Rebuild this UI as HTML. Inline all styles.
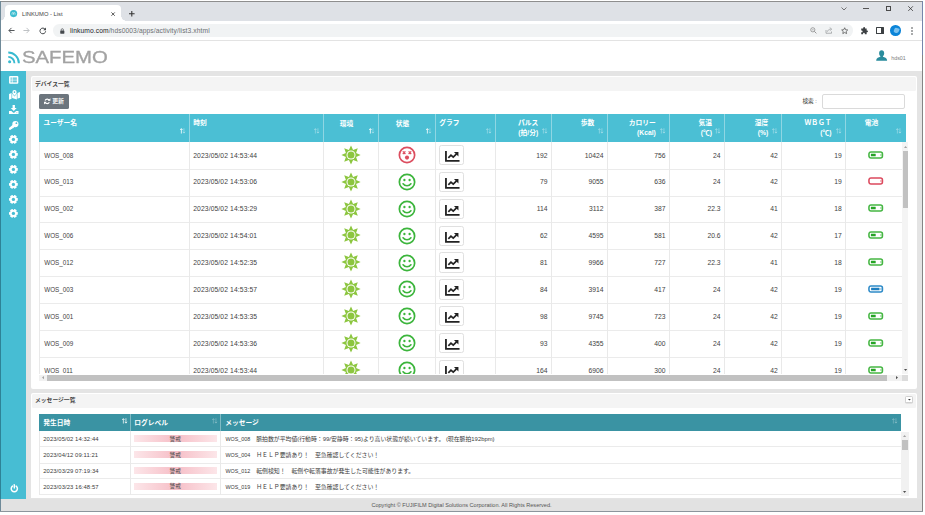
<!DOCTYPE html>
<html lang="ja">
<head>
<meta charset="utf-8">
<title>LINKUMO - List</title>
<style>
html,body{margin:0;padding:0;}
body{width:925px;height:515px;position:relative;overflow:hidden;background:#fff;
  font-family:"Liberation Sans","Noto Sans CJK JP",sans-serif;color:#222;}
*{box-sizing:border-box;}
.abs{position:absolute;}
svg{display:block;overflow:visible;}
/* ---------- browser window ---------- */
#win{position:absolute;left:0;top:0;width:925px;height:515px;background:#fff;overflow:hidden;}
#wc{position:absolute;left:1px;top:2px;width:921px;height:510px;}
#tabstrip{position:absolute;left:0;top:0;width:921px;height:19px;background:#dee1e6;}
#tab{position:absolute;left:3.8px;top:3.2px;width:116.6px;height:15.8px;background:#fff;border-radius:4px 4px 0 0;}
#tab:before,#tab:after{content:'';position:absolute;bottom:0;width:3.5px;height:3.5px;}
#tab:before{left:-3.5px;background:radial-gradient(circle at 0 0,rgba(255,255,255,0) 3.3px,#fff 3.6px);}
#tab:after{right:-3.5px;background:radial-gradient(circle at 100% 0,rgba(255,255,255,0) 3.3px,#fff 3.6px);}
#tab .t{position:absolute;left:17.2px;top:5.8px;font-size:5.8px;line-height:7px;color:#444;white-space:nowrap;}
#toolbar{position:absolute;left:0;top:19px;width:921px;height:19.5px;background:#fff;border-bottom:1px solid #e3e3e3;}
#omni{position:absolute;left:52.4px;top:3.4px;width:800px;height:12.6px;border-radius:6.3px;background:#f1f3f4;}
#omni .u{position:absolute;left:16.6px;top:2.3px;font-size:6.7px;line-height:8px;color:#6b6f73;white-space:nowrap;letter-spacing:0.1px;}
#omni .u b{font-weight:normal;color:#202124;}
/* ---------- app ---------- */
#apphead{position:absolute;left:0;top:38.5px;width:921px;height:30.5px;background:#fff;}
#side{position:absolute;left:0;top:69px;width:25.2px;height:428px;background:#47bdd3;}
#main{position:absolute;left:25.2px;top:69px;width:895.8px;height:428px;background:#e4e4e4;}
#foot{position:absolute;left:0;top:497px;width:921px;height:12px;background:#e2e2e2;text-align:center;font-size:5.55px;line-height:12.4px;color:#555;}
.panel{position:absolute;background:#fff;border-radius:2px;}
.phead{position:absolute;left:1px;top:1px;right:1px;background:#f4f4f4;border-radius:1.5px;}
.ptitle{position:absolute;font-weight:bold;font-size:5.8px;line-height:9px;color:#444;white-space:nowrap;}

.th{font-weight:bold;color:#fff;font-size:6.75px;line-height:9px;white-space:nowrap;}
.td{font-size:6.75px;line-height:9px;color:#424242;white-space:nowrap;}
.tn{font-size:6.3px;}
.tt{letter-spacing:0.11px;}
.tm{font-size:5.88px;line-height:8px;color:#3a3a3a;white-space:nowrap;}
.tm i{font-style:normal;font-size:5.4px;}
.tmd{letter-spacing:0.08px;}
.gbtn{width:24.6px;height:20.2px;border:1px solid #e0e0e0;border-radius:2.4px;background:#fff;}
</style>
</head>
<body>
<div id="win">
<div class="abs" style="left:0;top:1px;width:923px;height:1px;background:#8e8e8e"></div>
<div class="abs" style="left:0;top:1px;width:1px;height:511px;background:#6f8a99"></div>
<div class="abs" style="left:0;top:71px;width:1px;height:428px;background:#2e8296"></div>
<div class="abs" style="left:922px;top:1px;width:1px;height:511px;background:#858585"></div>
<div class="abs" style="left:922px;top:1px;width:1px;height:54px;background:#7686ab"></div>
<div class="abs" style="left:0;top:511px;width:923px;height:1px;background:#8c959c"></div>
<div id="wc">
  <!-- tab strip -->
  <div id="tabstrip">
    <div id="tab">
      <svg class="abs" style="left:5.7px;top:5.1px" width="7.2" height="7.2" viewBox="0 0 16 16"><circle cx="8" cy="8" r="8" fill="#3bbccf"/><path d="M4.5 10.5v-3a1.7 1.7 0 0 1 3.4 0v3M7.9 7.5a1.7 1.7 0 0 1 3.4 0v3" fill="none" stroke="#fff" stroke-width="1.3"/></svg>
      <div class="t">LINKUMO - List</div>
      <svg class="abs" style="left:106.5px;top:6.8px" width="4.2" height="4.2" viewBox="0 0 10 10"><path d="M1 1l8 8M9 1l-8 8" stroke="#333" stroke-width="1.9" fill="none"/></svg>
    </div>
    <svg class="abs" style="left:128.2px;top:8.8px" width="5.6" height="5.6" viewBox="0 0 10 10"><path d="M5 0v10M0 5h10" stroke="#333" stroke-width="1.9" fill="none"/></svg>
    <!-- window controls -->
    <svg class="abs" style="left:839.9px;top:4.6px" width="6" height="4" viewBox="0 0 12 8"><path d="M1 1l5 5 5-5" fill="none" stroke="#444" stroke-width="1.4"/></svg>
    <div class="abs" style="left:862.3px;top:6px;width:5.6px;height:1px;background:#555"></div>
    <div class="abs" style="left:885px;top:4px;width:5px;height:5px;border:1px solid #4a4a4a"></div>
    <svg class="abs" style="left:907.1px;top:3.8px" width="5.2" height="5.2" viewBox="0 0 10 10"><path d="M0.5 0.5l9 9M9.5 0.5l-9 9" stroke="#333" stroke-width="1.5" fill="none"/></svg>
  </div>
  <!-- toolbar -->
  <div id="toolbar">
    <svg class="abs" style="left:6.5px;top:6.1px" width="7" height="7" viewBox="0 0 16 16"><path d="M15 8H2.5M8 2L2 8l6 6" fill="none" stroke="#3c4043" stroke-width="2"/></svg>
    <svg class="abs" style="left:22.1px;top:6.1px" width="7" height="7" viewBox="0 0 16 16"><path d="M1 8h12.5M8 2l6 6-6 6" fill="none" stroke="#b5b8bb" stroke-width="2"/></svg>
    <svg class="abs" style="left:37.6px;top:5.6px" width="7.6" height="7.6" viewBox="0 0 16 16"><path d="M13.2 5.2A6 6 0 1 0 14 9" fill="none" stroke="#3c4043" stroke-width="2"/><path d="M14.6 1v5.6H9z" fill="#3c4043"/></svg>
    <div id="omni">
      <svg class="abs" style="left:6.3px;top:3.3px" width="4.6" height="5.8" viewBox="0 0 10 12"><rect x="0.5" y="5" width="9" height="7" rx="1" fill="#45494d"/><path d="M2.6 5.5V3.6a2.4 2.4 0 0 1 4.8 0v1.9" fill="none" stroke="#45494d" stroke-width="1.5"/></svg>
      <div class="u"><b>linkumo.com</b>/hds0003/apps/activity/list3.xhtml</div>
      <!-- zoom, share, star -->
      <svg class="abs" style="left:757px;top:2.6px" width="7" height="7" viewBox="0 0 14 14"><circle cx="5.6" cy="5.6" r="4.2" fill="none" stroke="#777" stroke-width="1.3"/><path d="M8.8 8.8l4 4" stroke="#777" stroke-width="1.5"/><path d="M3.8 5.6h3.6" stroke="#777" stroke-width="1"/></svg>
      <svg class="abs" style="left:771.6px;top:2.6px" width="8" height="7" viewBox="0 0 16 14"><path d="M2 6v6.5h11V9" fill="none" stroke="#8a8d90" stroke-width="1.3"/><path d="M5 9.5c.5-3 2.5-5 6-5.2" fill="none" stroke="#8a8d90" stroke-width="1.3"/><path d="M9.5 1.2l4 3.1-4 3.1" fill="none" stroke="#8a8d90" stroke-width="1.3"/></svg>
      <svg class="abs" style="left:787.9px;top:2.3px" width="7.4" height="7.4" viewBox="0 0 16 16"><path d="M8 1.6l2 4.3 4.6.500-3.4 3.2.9 4.7L8 12l-4.1 2.3.9-4.7L1.4 6.4 6 5.9z" fill="none" stroke="#444" stroke-width="1.5" stroke-linejoin="round"/></svg>
    </div>
    <!-- extension, side panel, avatar, menu -->
    <svg class="abs" style="left:859.4px;top:5.5px" width="8.2" height="8.2" viewBox="0 0 16 16"><path d="M6.5 1.2a1.7 1.7 0 0 1 3.3.600V3h3.2v3.6h.800a1.8 1.8 0 0 1 0 3.6H13V14H9.4v-1a1.7 1.7 0 0 0-3.4 0v1H2.4v-3.6h1a1.7 1.7 0 0 0 0-3.4h-1V3h3.7V1.8z" fill="#3c4043"/></svg>
    <div class="abs" style="left:875.2px;top:6.2px;width:7.4px;height:6.8px;border:1px solid #3c4043;border-right-width:3px;border-radius:0.6px"></div>
    <div class="abs" style="left:889.4px;top:4.2px;width:10.6px;height:10.6px;border-radius:50%;background:#0b84d8;overflow:hidden"><div class="abs" style="left:3.2px;top:3.2px;width:5px;height:5px;background:#7cc1ee;border-radius:40% 10% 60% 30%;transform:rotate(20deg)"></div></div>
    <svg class="abs" style="left:909.5px;top:5.6px" width="2" height="8" viewBox="0 0 2 8"><circle cx="1" cy="1" r="0.8" fill="#3c4043"/><circle cx="1" cy="4" r="0.8" fill="#3c4043"/><circle cx="1" cy="7" r="0.8" fill="#3c4043"/></svg>
  </div>

  <!-- app header -->
  <div id="apphead">
    <!-- logo -->
    <svg class="abs" style="left:7px;top:10.2px" width="12.4" height="12.4" viewBox="0 0 24 24"><circle cx="3.2" cy="20.8" r="3" fill="#38bad0"/><path d="M0.5 11.5a12 12 0 0 1 12 12" fill="none" stroke="#38bad0" stroke-width="3.6"/><path d="M0.5 3a20.5 20.5 0 0 1 20.5 20.5" fill="none" stroke="#38bad0" stroke-width="3.8"/></svg>
    <div class="abs" id="logo" style="left:20.6px;top:8.4px;font-size:16px;line-height:18px;color:#a3a3a3;-webkit-text-stroke:0.3px #a3a3a3;letter-spacing:0;white-space:nowrap;transform-origin:0 0;transform:scale(1.27,1)">SAFEMO</div>
    <!-- user -->
    <svg class="abs" style="left:875px;top:9.2px" width="11.3" height="11.3" viewBox="0 0 24 24"><path d="M12 0.5c3.3 0 5.4 2.6 5.4 6.2 0 2.6-1.2 5-2.6 6.2v1.7c3.4 1 8.2 3 8.7 6.6V23H.500v-1.8c.500-3.6 5.3-5.6 8.7-6.6v-1.7C7.8 11.7 6.6 9.3 6.6 6.7 6.6 3.1 8.7.500 12 .500z" fill="#2a8c9d"/></svg>
    <div class="abs" style="left:890.3px;top:14.9px;font-size:5.3px;line-height:6px;color:#7d7d7d;white-space:nowrap">hds01</div>
  </div>

  <div id="side"><svg class="abs" style="left:8px;top:5.1px" width="9.4" height="7.8" viewBox="0 0 19 16"><rect x="0" y="0" width="19" height="16" rx="2.2" fill="#fff"/><g fill="#47bdd3"><rect x="3" y="3.2" width="2.6" height="2.4"/><rect x="7.2" y="3.2" width="8.8" height="2.4"/><rect x="3" y="6.9" width="2.6" height="2.4"/><rect x="7.2" y="6.9" width="8.8" height="2.4"/><rect x="3" y="10.6" width="2.6" height="2.4"/><rect x="7.2" y="10.6" width="8.8" height="2.4"/></g></svg>
<svg class="abs" style="left:7.6px;top:19.4px" width="11" height="9.4" viewBox="0 0 22 19"><g fill="#fff"><path d="M0 8.2l5-2v11.6l-5 2z"/><path d="M6.2 6.6c1.2 2.3 3.2 4.6 4.8 6.3 1.6-1.7 3.6-4 4.8-6.3l0 12.4-9.6-2.6z"/><path d="M17 6.2l5-2v11.6l-5 2z"/><path d="M11 0a4.3 4.3 0 0 1 4.3 4.3c0 2-2.4 5-4.3 7.1-1.9-2.1-4.3-5.1-4.3-7.1A4.3 4.3 0 0 1 11 0z"/></g><circle cx="11" cy="4.2" r="1.7" fill="#47bdd3"/></svg>
<svg class="abs" style="left:8px;top:34px" width="9.5" height="9.2" viewBox="0 0 19 18"><g fill="#fff"><path d="M7.2 0h4.6v6h3.6L9.5 12 3.6 6h3.6z"/><path d="M0 11.8h4.8l2.6 2.6a3 3 0 0 0 4.2 0l2.6-2.6H19V18H0z"/></g><circle cx="15.8" cy="15.4" r="0.9" fill="#47bdd3"/></svg>
<svg class="abs" style="left:8px;top:49.6px" width="9.5" height="8.8" viewBox="0 0 19 17.6"><g fill="#fff"><circle cx="12.8" cy="6.2" r="6.2"/><path d="M8.2 7.2l3.6 3.6-3.6 3.6H6.4v1.8H4.2v1.4H0v-3.4z"/></g><circle cx="14.8" cy="4.4" r="1.8" fill="#47bdd3"/></svg>
<svg class="abs" style="left:8.3px;top:64px" width="8.8" height="8.8" viewBox="-4.4 -4.4 8.8 8.8"><g fill="#fff"><rect x="-1.45" y="-4.4" width="2.9" height="8.8" rx="0.5" transform="rotate(30)"/><rect x="-1.45" y="-4.4" width="2.9" height="8.8" rx="0.5" transform="rotate(90)"/><rect x="-1.45" y="-4.4" width="2.9" height="8.8" rx="0.5" transform="rotate(150)"/><circle r="3.39"/></g><circle r="1.63" fill="#47bdd3"/></svg>
<svg class="abs" style="left:8.3px;top:79px" width="8.8" height="8.8" viewBox="-4.4 -4.4 8.8 8.8"><g fill="#fff"><rect x="-1.45" y="-4.4" width="2.9" height="8.8" rx="0.5" transform="rotate(30)"/><rect x="-1.45" y="-4.4" width="2.9" height="8.8" rx="0.5" transform="rotate(90)"/><rect x="-1.45" y="-4.4" width="2.9" height="8.8" rx="0.5" transform="rotate(150)"/><circle r="3.39"/></g><circle r="1.63" fill="#47bdd3"/></svg>
<svg class="abs" style="left:8.3px;top:93.9px" width="8.8" height="8.8" viewBox="-4.4 -4.4 8.8 8.8"><g fill="#fff"><rect x="-1.45" y="-4.4" width="2.9" height="8.8" rx="0.5" transform="rotate(30)"/><rect x="-1.45" y="-4.4" width="2.9" height="8.8" rx="0.5" transform="rotate(90)"/><rect x="-1.45" y="-4.4" width="2.9" height="8.8" rx="0.5" transform="rotate(150)"/><circle r="3.39"/></g><circle r="1.63" fill="#47bdd3"/></svg>
<svg class="abs" style="left:8.3px;top:108.7px" width="8.8" height="8.8" viewBox="-4.4 -4.4 8.8 8.8"><g fill="#fff"><rect x="-1.45" y="-4.4" width="2.9" height="8.8" rx="0.5" transform="rotate(30)"/><rect x="-1.45" y="-4.4" width="2.9" height="8.8" rx="0.5" transform="rotate(90)"/><rect x="-1.45" y="-4.4" width="2.9" height="8.8" rx="0.5" transform="rotate(150)"/><circle r="3.39"/></g><circle r="1.63" fill="#47bdd3"/></svg>
<svg class="abs" style="left:8.3px;top:123.5px" width="8.8" height="8.8" viewBox="-4.4 -4.4 8.8 8.8"><g fill="#fff"><rect x="-1.45" y="-4.4" width="2.9" height="8.8" rx="0.5" transform="rotate(30)"/><rect x="-1.45" y="-4.4" width="2.9" height="8.8" rx="0.5" transform="rotate(90)"/><rect x="-1.45" y="-4.4" width="2.9" height="8.8" rx="0.5" transform="rotate(150)"/><circle r="3.39"/></g><circle r="1.63" fill="#47bdd3"/></svg>
<svg class="abs" style="left:8.3px;top:138.3px" width="8.8" height="8.8" viewBox="-4.4 -4.4 8.8 8.8"><g fill="#fff"><rect x="-1.45" y="-4.4" width="2.9" height="8.8" rx="0.5" transform="rotate(30)"/><rect x="-1.45" y="-4.4" width="2.9" height="8.8" rx="0.5" transform="rotate(90)"/><rect x="-1.45" y="-4.4" width="2.9" height="8.8" rx="0.5" transform="rotate(150)"/><circle r="3.39"/></g><circle r="1.63" fill="#47bdd3"/></svg>
<svg class="abs" style="left:8.7px;top:412.5px" width="8.6" height="8.6" viewBox="0 0 18 18"><path d="M5.2 4.4A6.5 6.5 0 1 0 12.8 4.4" fill="none" stroke="#fff" stroke-width="3.1" stroke-linecap="round"/><path d="M9 1.2v7.3" stroke="#fff" stroke-width="2.9" stroke-linecap="round"/></svg></div>

  <div id="main"><div id="L" style="position:absolute;left:-26.2px;top:-71px;width:925px;height:515px">
<div class="panel" style="left:30.6px;top:76px;width:886.4px;height:312.5px"><div class="phead" style="height:14.2px"></div></div>
<div class="ptitle" style="left:35px;top:79.5px">デバイス一覧</div>
<div class="abs" style="left:39px;top:94.4px;width:30px;height:14.2px;background:#6c757d;border-radius:1.6px"></div>
<svg class="abs" style="left:44.4px;top:97.8px" width="6.4" height="6.6" viewBox="0 0 12 12"><path d="M10 4.3A4.4 4.4 0 0 0 2 4.3M2 7.7a4.4 4.4 0 0 0 8 0" fill="none" stroke="#fff" stroke-width="2.3"/><path d="M12 0.2v5H7zM0 11.8v-5h5z" fill="#fff"/></svg>
<div class="abs" style="left:52.2px;top:97.4px;font-size:5.9px;line-height:8px;font-weight:bold;color:#f4f4f4;white-space:nowrap">更新</div>
<div class="abs" style="left:802.4px;top:97.4px;font-size:5.6px;line-height:8px;color:#333;white-space:nowrap">検索 :</div>
<div class="abs" style="left:822px;top:94.4px;width:83.4px;height:14.2px;border:1px solid #dadada;border-radius:2px;background:#fff"></div>
<div class="abs" style="left:39.4px;top:114.4px;width:866.6px;height:27.2px;background:#4bbfd4"></div>
<div class="abs" style="left:188.9px;top:114.4px;width:1px;height:27.2px;background:#8fd6e3"></div>
<div class="abs" style="left:322.9px;top:114.4px;width:1px;height:27.2px;background:#8fd6e3"></div>
<div class="abs" style="left:377.9px;top:114.4px;width:1px;height:27.2px;background:#8fd6e3"></div>
<div class="abs" style="left:434.9px;top:114.4px;width:1px;height:27.2px;background:#8fd6e3"></div>
<div class="abs" style="left:495.3px;top:114.4px;width:1px;height:27.2px;background:#8fd6e3"></div>
<div class="abs" style="left:550.9px;top:114.4px;width:1px;height:27.2px;background:#8fd6e3"></div>
<div class="abs" style="left:606.9px;top:114.4px;width:1px;height:27.2px;background:#8fd6e3"></div>
<div class="abs" style="left:668.9px;top:114.4px;width:1px;height:27.2px;background:#8fd6e3"></div>
<div class="abs" style="left:723.9px;top:114.4px;width:1px;height:27.2px;background:#8fd6e3"></div>
<div class="abs" style="left:781.1px;top:114.4px;width:1px;height:27.2px;background:#8fd6e3"></div>
<div class="abs" style="left:845.1px;top:114.4px;width:1px;height:27.2px;background:#8fd6e3"></div>
<div class="abs th" style="top:117.9px;left:43.4px;">ユーザー名</div>
<div class="abs th" style="top:117.9px;left:193.2px;">時刻</div>
<div class="abs th" style="top:118.8px;left:306.6px;width:80px;text-align:center;">環境</div>
<div class="abs th" style="top:118.8px;left:362.6px;width:80px;text-align:center;">状態</div>
<div class="abs th" style="top:117.9px;left:439.2px;">グラフ</div>
<div class="abs th" style="top:117.9px;right:386.8px;text-align:right;">パルス</div>
<div class="abs th" style="top:127.7px;right:386.8px;text-align:right;">(拍/分)</div>
<div class="abs th" style="top:117.9px;right:330.8px;text-align:right;">歩数</div>
<div class="abs th" style="top:117.9px;right:269.2px;text-align:right;">カロリー</div>
<div class="abs th" style="top:127.7px;right:269.2px;text-align:right;">(Kcal)</div>
<div class="abs th" style="top:117.9px;right:213px;text-align:right;">気温</div>
<div class="abs th" style="top:127.7px;right:213px;text-align:right;">(℃)</div>
<div class="abs th" style="top:117.9px;right:156.8px;text-align:right;">湿度</div>
<div class="abs th" style="top:127.7px;right:156.8px;text-align:right;">(%)</div>
<div class="abs th" style="top:117.9px;right:93.6px;text-align:right;">ＷＢＧＴ</div>
<div class="abs th" style="top:127.7px;right:93.6px;text-align:right;">(℃)</div>
<div class="abs th" style="top:117.9px;left:831.4px;width:80px;text-align:center;">電池</div>
<svg class="abs" style="left:179.5px;top:128.3px" width="5.3" height="5.8" viewBox="0 0 12.4 12.8"><g fill="none" stroke="#fff" stroke-width="1.9"><g opacity="1"><path d="M3.2 12.6V1.2M0.4 4.2l2.8-3 2.8 3"/></g><g opacity="0.45"><path d="M9.2 0.2v11.4M6.4 8.6l2.8 3 2.8-3"/></g></g></svg>
<svg class="abs" style="left:313.5px;top:128.3px" width="5.3" height="5.8" viewBox="0 0 12.4 12.8"><g fill="none" stroke="#fff" stroke-width="1.9"><g opacity="0.4"><path d="M3.2 12.6V1.2M0.4 4.2l2.8-3 2.8 3"/></g><g opacity="0.4"><path d="M9.2 0.2v11.4M6.4 8.6l2.8 3 2.8-3"/></g></g></svg>
<svg class="abs" style="left:368.5px;top:128.3px" width="5.3" height="5.8" viewBox="0 0 12.4 12.8"><g fill="none" stroke="#fff" stroke-width="1.9"><g opacity="1"><path d="M3.2 12.6V1.2M0.4 4.2l2.8-3 2.8 3"/></g><g opacity="0.4"><path d="M9.2 0.2v11.4M6.4 8.6l2.8 3 2.8-3"/></g></g></svg>
<svg class="abs" style="left:425.5px;top:128.3px" width="5.3" height="5.8" viewBox="0 0 12.4 12.8"><g fill="none" stroke="#fff" stroke-width="1.9"><g opacity="1"><path d="M3.2 12.6V1.2M0.4 4.2l2.8-3 2.8 3"/></g><g opacity="0.4"><path d="M9.2 0.2v11.4M6.4 8.6l2.8 3 2.8-3"/></g></g></svg>
<svg class="abs" style="left:485.9px;top:128.3px" width="5.3" height="5.8" viewBox="0 0 12.4 12.8"><g fill="none" stroke="#fff" stroke-width="1.9"><g opacity="0.4"><path d="M3.2 12.6V1.2M0.4 4.2l2.8-3 2.8 3"/></g><g opacity="0.4"><path d="M9.2 0.2v11.4M6.4 8.6l2.8 3 2.8-3"/></g></g></svg>
<svg class="abs" style="left:541.5px;top:128.3px" width="5.3" height="5.8" viewBox="0 0 12.4 12.8"><g fill="none" stroke="#fff" stroke-width="1.9"><g opacity="0.4"><path d="M3.2 12.6V1.2M0.4 4.2l2.8-3 2.8 3"/></g><g opacity="0.4"><path d="M9.2 0.2v11.4M6.4 8.6l2.8 3 2.8-3"/></g></g></svg>
<svg class="abs" style="left:597.5px;top:128.3px" width="5.3" height="5.8" viewBox="0 0 12.4 12.8"><g fill="none" stroke="#fff" stroke-width="1.9"><g opacity="0.4"><path d="M3.2 12.6V1.2M0.4 4.2l2.8-3 2.8 3"/></g><g opacity="0.4"><path d="M9.2 0.2v11.4M6.4 8.6l2.8 3 2.8-3"/></g></g></svg>
<svg class="abs" style="left:659.5px;top:128.3px" width="5.3" height="5.8" viewBox="0 0 12.4 12.8"><g fill="none" stroke="#fff" stroke-width="1.9"><g opacity="0.4"><path d="M3.2 12.6V1.2M0.4 4.2l2.8-3 2.8 3"/></g><g opacity="0.4"><path d="M9.2 0.2v11.4M6.4 8.6l2.8 3 2.8-3"/></g></g></svg>
<svg class="abs" style="left:714.5px;top:128.3px" width="5.3" height="5.8" viewBox="0 0 12.4 12.8"><g fill="none" stroke="#fff" stroke-width="1.9"><g opacity="0.4"><path d="M3.2 12.6V1.2M0.4 4.2l2.8-3 2.8 3"/></g><g opacity="0.4"><path d="M9.2 0.2v11.4M6.4 8.6l2.8 3 2.8-3"/></g></g></svg>
<svg class="abs" style="left:771.7px;top:128.3px" width="5.3" height="5.8" viewBox="0 0 12.4 12.8"><g fill="none" stroke="#fff" stroke-width="1.9"><g opacity="0.4"><path d="M3.2 12.6V1.2M0.4 4.2l2.8-3 2.8 3"/></g><g opacity="0.4"><path d="M9.2 0.2v11.4M6.4 8.6l2.8 3 2.8-3"/></g></g></svg>
<svg class="abs" style="left:835.7px;top:128.3px" width="5.3" height="5.8" viewBox="0 0 12.4 12.8"><g fill="none" stroke="#fff" stroke-width="1.9"><g opacity="0.4"><path d="M3.2 12.6V1.2M0.4 4.2l2.8-3 2.8 3"/></g><g opacity="0.4"><path d="M9.2 0.2v11.4M6.4 8.6l2.8 3 2.8-3"/></g></g></svg>
<svg class="abs" style="left:896.1px;top:128.3px" width="5.3" height="5.8" viewBox="0 0 12.4 12.8"><g fill="none" stroke="#fff" stroke-width="1.9"><g opacity="0.4"><path d="M3.2 12.6V1.2M0.4 4.2l2.8-3 2.8 3"/></g><g opacity="0.4"><path d="M9.2 0.2v11.4M6.4 8.6l2.8 3 2.8-3"/></g></g></svg>
<div class="abs" id="dbody" style="left:39.4px;top:141.6px;width:862.6px;height:232.4px;overflow:hidden;background:#fff">
<div class="abs" style="left:0;top:27.12px;width:870px;height:1px;background:#ebebeb"></div>
<div class="abs td tn" style="left:4.8px;top:8.98px">WOS_008</div>
<div class="abs td tt" style="left:153.8px;top:8.98px">2023/05/02 14:53:44</div>
<svg class="abs" style="left:301.8px;top:3.19px" width="20" height="20" viewBox="-10 -10 20 20"><polygon points="0,-9.6 2.1,-5.08 6.79,-6.79 5.08,-2.1 9.6,0 5.08,2.1 6.79,6.79 2.1,5.08 0,9.6 -2.1,5.08 -6.79,6.79 -5.08,2.1 -9.6,0 -5.08,-2.1 -6.79,-6.79 -2.1,-5.08" fill="#8cc63f"/><circle r="4.5" fill="#fff"/><circle r="3.5" fill="#8cc63f"/></svg>
<svg class="abs" style="left:358.6px;top:4.49px" width="18" height="18" viewBox="-9 -9 18 18"><circle r="7.65" fill="#fff" stroke="#dc4e5f" stroke-width="1.7"/><path d="M-4.2 -3.6l2.6 2.6M-1.6 -3.6l-2.6 2.6M1.6 -3.6l2.6 2.6M4.2 -3.6l-2.6 2.6" stroke="#dc4e5f" stroke-width="1.25" fill="none"/><circle cx="0" cy="2.6" r="2.05" fill="#dc4e5f"/></svg>
<div class="abs gbtn" style="left:399.6px;top:3.38px"><svg class="abs" style="left:5.2px;top:5px" width="14.6" height="10.8" viewBox="0 0 29 21.6"><path d="M1.8 0v19.6H29" fill="none" stroke="#222" stroke-width="3.6"/><path d="M6.6 13.6l5.2-5.4 4.6 4.2 6.6-6.6" fill="none" stroke="#222" stroke-width="3.4"/><path d="M17.8 2.2h9v9z" fill="#222"/></svg></div>
<div class="abs td" style="right:354.4px;top:8.98px;text-align:right">192</div>
<div class="abs td" style="right:298.4px;top:8.98px;text-align:right">10424</div>
<div class="abs td" style="right:236.4px;top:8.98px;text-align:right">756</div>
<div class="abs td" style="right:181.4px;top:8.98px;text-align:right">24</div>
<div class="abs td" style="right:124.2px;top:8.98px;text-align:right">42</div>
<div class="abs td" style="right:60.2px;top:8.98px;text-align:right">19</div>
<svg class="abs" style="left:829.1px;top:8.99px" width="15.4" height="8" viewBox="0 0 15.4 8"><rect x="0.95" y="0.95" width="13.5" height="6.1" rx="2" fill="#fff" stroke="#45b643" stroke-width="1.55"/><path d="M12.6 2.9l1.3 1.1-1.3 1.1z" fill="#45b643"/><rect x="2.9" y="2.7" width="4.8" height="2.6" rx="0.3" fill="#25a425"/></svg>
<div class="abs" style="left:0;top:53.99px;width:870px;height:1px;background:#ebebeb"></div>
<div class="abs td tn" style="left:4.8px;top:35.85px">WOS_013</div>
<div class="abs td tt" style="left:153.8px;top:35.85px">2023/05/02 14:53:06</div>
<svg class="abs" style="left:301.8px;top:30.05px" width="20" height="20" viewBox="-10 -10 20 20"><polygon points="0,-9.6 2.1,-5.08 6.79,-6.79 5.08,-2.1 9.6,0 5.08,2.1 6.79,6.79 2.1,5.08 0,9.6 -2.1,5.08 -6.79,6.79 -5.08,2.1 -9.6,0 -5.08,-2.1 -6.79,-6.79 -2.1,-5.08" fill="#8cc63f"/><circle r="4.5" fill="#fff"/><circle r="3.5" fill="#8cc63f"/></svg>
<svg class="abs" style="left:358.6px;top:31.35px" width="18" height="18" viewBox="-9 -9 18 18"><circle r="7.65" fill="#fff" stroke="#3cb53c" stroke-width="1.7"/><ellipse cx="-2.6" cy="-2" rx="1.15" ry="1.35" fill="#3cb53c"/><ellipse cx="2.6" cy="-2" rx="1.15" ry="1.35" fill="#3cb53c"/><path d="M-3.9 1.7a4.7 4.7 0 0 0 7.8 0" fill="none" stroke="#3cb53c" stroke-width="1.55" stroke-linecap="round"/></svg>
<div class="abs gbtn" style="left:399.6px;top:30.25px"><svg class="abs" style="left:5.2px;top:5px" width="14.6" height="10.8" viewBox="0 0 29 21.6"><path d="M1.8 0v19.6H29" fill="none" stroke="#222" stroke-width="3.6"/><path d="M6.6 13.6l5.2-5.4 4.6 4.2 6.6-6.6" fill="none" stroke="#222" stroke-width="3.4"/><path d="M17.8 2.2h9v9z" fill="#222"/></svg></div>
<div class="abs td" style="right:354.4px;top:35.85px;text-align:right">79</div>
<div class="abs td" style="right:298.4px;top:35.85px;text-align:right">9055</div>
<div class="abs td" style="right:236.4px;top:35.85px;text-align:right">636</div>
<div class="abs td" style="right:181.4px;top:35.85px;text-align:right">24</div>
<div class="abs td" style="right:124.2px;top:35.85px;text-align:right">42</div>
<div class="abs td" style="right:60.2px;top:35.85px;text-align:right">19</div>
<svg class="abs" style="left:829.1px;top:35.85px" width="15.4" height="8" viewBox="0 0 15.4 8"><rect x="0.95" y="0.95" width="13.5" height="6.1" rx="2" fill="#fff" stroke="#dc4a5e" stroke-width="1.55"/><path d="M12.6 2.9l1.3 1.1-1.3 1.1z" fill="#dc4a5e"/></svg>
<div class="abs" style="left:0;top:80.86px;width:870px;height:1px;background:#ebebeb"></div>
<div class="abs td tn" style="left:4.8px;top:62.72px">WOS_002</div>
<div class="abs td tt" style="left:153.8px;top:62.72px">2023/05/02 14:53:29</div>
<svg class="abs" style="left:301.8px;top:56.92px" width="20" height="20" viewBox="-10 -10 20 20"><polygon points="0,-9.6 2.1,-5.08 6.79,-6.79 5.08,-2.1 9.6,0 5.08,2.1 6.79,6.79 2.1,5.08 0,9.6 -2.1,5.08 -6.79,6.79 -5.08,2.1 -9.6,0 -5.08,-2.1 -6.79,-6.79 -2.1,-5.08" fill="#8cc63f"/><circle r="4.5" fill="#fff"/><circle r="3.5" fill="#8cc63f"/></svg>
<svg class="abs" style="left:358.6px;top:58.22px" width="18" height="18" viewBox="-9 -9 18 18"><circle r="7.65" fill="#fff" stroke="#3cb53c" stroke-width="1.7"/><ellipse cx="-2.6" cy="-2" rx="1.15" ry="1.35" fill="#3cb53c"/><ellipse cx="2.6" cy="-2" rx="1.15" ry="1.35" fill="#3cb53c"/><path d="M-3.9 1.7a4.7 4.7 0 0 0 7.8 0" fill="none" stroke="#3cb53c" stroke-width="1.55" stroke-linecap="round"/></svg>
<div class="abs gbtn" style="left:399.6px;top:57.12px"><svg class="abs" style="left:5.2px;top:5px" width="14.6" height="10.8" viewBox="0 0 29 21.6"><path d="M1.8 0v19.6H29" fill="none" stroke="#222" stroke-width="3.6"/><path d="M6.6 13.6l5.2-5.4 4.6 4.2 6.6-6.6" fill="none" stroke="#222" stroke-width="3.4"/><path d="M17.8 2.2h9v9z" fill="#222"/></svg></div>
<div class="abs td" style="right:354.4px;top:62.72px;text-align:right">114</div>
<div class="abs td" style="right:298.4px;top:62.72px;text-align:right">3112</div>
<div class="abs td" style="right:236.4px;top:62.72px;text-align:right">387</div>
<div class="abs td" style="right:181.4px;top:62.72px;text-align:right">22.3</div>
<div class="abs td" style="right:124.2px;top:62.72px;text-align:right">41</div>
<div class="abs td" style="right:60.2px;top:62.72px;text-align:right">18</div>
<svg class="abs" style="left:829.1px;top:62.72px" width="15.4" height="8" viewBox="0 0 15.4 8"><rect x="0.95" y="0.95" width="13.5" height="6.1" rx="2" fill="#fff" stroke="#45b643" stroke-width="1.55"/><path d="M12.6 2.9l1.3 1.1-1.3 1.1z" fill="#45b643"/><rect x="2.9" y="2.7" width="4.8" height="2.6" rx="0.3" fill="#25a425"/></svg>
<div class="abs" style="left:0;top:107.73px;width:870px;height:1px;background:#ebebeb"></div>
<div class="abs td tn" style="left:4.8px;top:89.59px">WOS_006</div>
<div class="abs td tt" style="left:153.8px;top:89.59px">2023/05/02 14:54:01</div>
<svg class="abs" style="left:301.8px;top:83.8px" width="20" height="20" viewBox="-10 -10 20 20"><polygon points="0,-9.6 2.1,-5.08 6.79,-6.79 5.08,-2.1 9.6,0 5.08,2.1 6.79,6.79 2.1,5.08 0,9.6 -2.1,5.08 -6.79,6.79 -5.08,2.1 -9.6,0 -5.08,-2.1 -6.79,-6.79 -2.1,-5.08" fill="#8cc63f"/><circle r="4.5" fill="#fff"/><circle r="3.5" fill="#8cc63f"/></svg>
<svg class="abs" style="left:358.6px;top:85.09px" width="18" height="18" viewBox="-9 -9 18 18"><circle r="7.65" fill="#fff" stroke="#3cb53c" stroke-width="1.7"/><ellipse cx="-2.6" cy="-2" rx="1.15" ry="1.35" fill="#3cb53c"/><ellipse cx="2.6" cy="-2" rx="1.15" ry="1.35" fill="#3cb53c"/><path d="M-3.9 1.7a4.7 4.7 0 0 0 7.8 0" fill="none" stroke="#3cb53c" stroke-width="1.55" stroke-linecap="round"/></svg>
<div class="abs gbtn" style="left:399.6px;top:84px"><svg class="abs" style="left:5.2px;top:5px" width="14.6" height="10.8" viewBox="0 0 29 21.6"><path d="M1.8 0v19.6H29" fill="none" stroke="#222" stroke-width="3.6"/><path d="M6.6 13.6l5.2-5.4 4.6 4.2 6.6-6.6" fill="none" stroke="#222" stroke-width="3.4"/><path d="M17.8 2.2h9v9z" fill="#222"/></svg></div>
<div class="abs td" style="right:354.4px;top:89.59px;text-align:right">62</div>
<div class="abs td" style="right:298.4px;top:89.59px;text-align:right">4595</div>
<div class="abs td" style="right:236.4px;top:89.59px;text-align:right">581</div>
<div class="abs td" style="right:181.4px;top:89.59px;text-align:right">20.6</div>
<div class="abs td" style="right:124.2px;top:89.59px;text-align:right">42</div>
<div class="abs td" style="right:60.2px;top:89.59px;text-align:right">17</div>
<svg class="abs" style="left:829.1px;top:89.59px" width="15.4" height="8" viewBox="0 0 15.4 8"><rect x="0.95" y="0.95" width="13.5" height="6.1" rx="2" fill="#fff" stroke="#45b643" stroke-width="1.55"/><path d="M12.6 2.9l1.3 1.1-1.3 1.1z" fill="#45b643"/><rect x="2.9" y="2.7" width="4.8" height="2.6" rx="0.3" fill="#25a425"/></svg>
<div class="abs" style="left:0;top:134.6px;width:870px;height:1px;background:#ebebeb"></div>
<div class="abs td tn" style="left:4.8px;top:116.47px">WOS_012</div>
<div class="abs td tt" style="left:153.8px;top:116.47px">2023/05/02 14:52:35</div>
<svg class="abs" style="left:301.8px;top:110.67px" width="20" height="20" viewBox="-10 -10 20 20"><polygon points="0,-9.6 2.1,-5.08 6.79,-6.79 5.08,-2.1 9.6,0 5.08,2.1 6.79,6.79 2.1,5.08 0,9.6 -2.1,5.08 -6.79,6.79 -5.08,2.1 -9.6,0 -5.08,-2.1 -6.79,-6.79 -2.1,-5.08" fill="#8cc63f"/><circle r="4.5" fill="#fff"/><circle r="3.5" fill="#8cc63f"/></svg>
<svg class="abs" style="left:358.6px;top:111.97px" width="18" height="18" viewBox="-9 -9 18 18"><circle r="7.65" fill="#fff" stroke="#3cb53c" stroke-width="1.7"/><ellipse cx="-2.6" cy="-2" rx="1.15" ry="1.35" fill="#3cb53c"/><ellipse cx="2.6" cy="-2" rx="1.15" ry="1.35" fill="#3cb53c"/><path d="M-3.9 1.7a4.7 4.7 0 0 0 7.8 0" fill="none" stroke="#3cb53c" stroke-width="1.55" stroke-linecap="round"/></svg>
<div class="abs gbtn" style="left:399.6px;top:110.87px"><svg class="abs" style="left:5.2px;top:5px" width="14.6" height="10.8" viewBox="0 0 29 21.6"><path d="M1.8 0v19.6H29" fill="none" stroke="#222" stroke-width="3.6"/><path d="M6.6 13.6l5.2-5.4 4.6 4.2 6.6-6.6" fill="none" stroke="#222" stroke-width="3.4"/><path d="M17.8 2.2h9v9z" fill="#222"/></svg></div>
<div class="abs td" style="right:354.4px;top:116.47px;text-align:right">81</div>
<div class="abs td" style="right:298.4px;top:116.47px;text-align:right">9966</div>
<div class="abs td" style="right:236.4px;top:116.47px;text-align:right">727</div>
<div class="abs td" style="right:181.4px;top:116.47px;text-align:right">22.3</div>
<div class="abs td" style="right:124.2px;top:116.47px;text-align:right">41</div>
<div class="abs td" style="right:60.2px;top:116.47px;text-align:right">18</div>
<svg class="abs" style="left:829.1px;top:116.47px" width="15.4" height="8" viewBox="0 0 15.4 8"><rect x="0.95" y="0.95" width="13.5" height="6.1" rx="2" fill="#fff" stroke="#45b643" stroke-width="1.55"/><path d="M12.6 2.9l1.3 1.1-1.3 1.1z" fill="#45b643"/><rect x="2.9" y="2.7" width="4.8" height="2.6" rx="0.3" fill="#25a425"/></svg>
<div class="abs" style="left:0;top:161.47px;width:870px;height:1px;background:#ebebeb"></div>
<div class="abs td tn" style="left:4.8px;top:143.34px">WOS_003</div>
<div class="abs td tt" style="left:153.8px;top:143.34px">2023/05/02 14:53:57</div>
<svg class="abs" style="left:301.8px;top:137.53px" width="20" height="20" viewBox="-10 -10 20 20"><polygon points="0,-9.6 2.1,-5.08 6.79,-6.79 5.08,-2.1 9.6,0 5.08,2.1 6.79,6.79 2.1,5.08 0,9.6 -2.1,5.08 -6.79,6.79 -5.08,2.1 -9.6,0 -5.08,-2.1 -6.79,-6.79 -2.1,-5.08" fill="#8cc63f"/><circle r="4.5" fill="#fff"/><circle r="3.5" fill="#8cc63f"/></svg>
<svg class="abs" style="left:358.6px;top:138.84px" width="18" height="18" viewBox="-9 -9 18 18"><circle r="7.65" fill="#fff" stroke="#3cb53c" stroke-width="1.7"/><ellipse cx="-2.6" cy="-2" rx="1.15" ry="1.35" fill="#3cb53c"/><ellipse cx="2.6" cy="-2" rx="1.15" ry="1.35" fill="#3cb53c"/><path d="M-3.9 1.7a4.7 4.7 0 0 0 7.8 0" fill="none" stroke="#3cb53c" stroke-width="1.55" stroke-linecap="round"/></svg>
<div class="abs gbtn" style="left:399.6px;top:137.73px"><svg class="abs" style="left:5.2px;top:5px" width="14.6" height="10.8" viewBox="0 0 29 21.6"><path d="M1.8 0v19.6H29" fill="none" stroke="#222" stroke-width="3.6"/><path d="M6.6 13.6l5.2-5.4 4.6 4.2 6.6-6.6" fill="none" stroke="#222" stroke-width="3.4"/><path d="M17.8 2.2h9v9z" fill="#222"/></svg></div>
<div class="abs td" style="right:354.4px;top:143.34px;text-align:right">84</div>
<div class="abs td" style="right:298.4px;top:143.34px;text-align:right">3914</div>
<div class="abs td" style="right:236.4px;top:143.34px;text-align:right">417</div>
<div class="abs td" style="right:181.4px;top:143.34px;text-align:right">24</div>
<div class="abs td" style="right:124.2px;top:143.34px;text-align:right">42</div>
<div class="abs td" style="right:60.2px;top:143.34px;text-align:right">19</div>
<svg class="abs" style="left:829.1px;top:143.34px" width="15.4" height="8" viewBox="0 0 15.4 8"><rect x="0.95" y="0.95" width="13.5" height="6.1" rx="2" fill="#fff" stroke="#2e8bc8" stroke-width="1.55"/><path d="M12.6 2.9l1.3 1.1-1.3 1.1z" fill="#2e8bc8"/><rect x="3.1" y="2.8" width="8.4" height="2.4" rx="0.3" fill="#1f7fc0"/></svg>
<div class="abs" style="left:0;top:188.34px;width:870px;height:1px;background:#ebebeb"></div>
<div class="abs td tn" style="left:4.8px;top:170.21px">WOS_001</div>
<div class="abs td tt" style="left:153.8px;top:170.21px">2023/05/02 14:53:35</div>
<svg class="abs" style="left:301.8px;top:164.41px" width="20" height="20" viewBox="-10 -10 20 20"><polygon points="0,-9.6 2.1,-5.08 6.79,-6.79 5.08,-2.1 9.6,0 5.08,2.1 6.79,6.79 2.1,5.08 0,9.6 -2.1,5.08 -6.79,6.79 -5.08,2.1 -9.6,0 -5.08,-2.1 -6.79,-6.79 -2.1,-5.08" fill="#8cc63f"/><circle r="4.5" fill="#fff"/><circle r="3.5" fill="#8cc63f"/></svg>
<svg class="abs" style="left:358.6px;top:165.71px" width="18" height="18" viewBox="-9 -9 18 18"><circle r="7.65" fill="#fff" stroke="#3cb53c" stroke-width="1.7"/><ellipse cx="-2.6" cy="-2" rx="1.15" ry="1.35" fill="#3cb53c"/><ellipse cx="2.6" cy="-2" rx="1.15" ry="1.35" fill="#3cb53c"/><path d="M-3.9 1.7a4.7 4.7 0 0 0 7.8 0" fill="none" stroke="#3cb53c" stroke-width="1.55" stroke-linecap="round"/></svg>
<div class="abs gbtn" style="left:399.6px;top:164.6px"><svg class="abs" style="left:5.2px;top:5px" width="14.6" height="10.8" viewBox="0 0 29 21.6"><path d="M1.8 0v19.6H29" fill="none" stroke="#222" stroke-width="3.6"/><path d="M6.6 13.6l5.2-5.4 4.6 4.2 6.6-6.6" fill="none" stroke="#222" stroke-width="3.4"/><path d="M17.8 2.2h9v9z" fill="#222"/></svg></div>
<div class="abs td" style="right:354.4px;top:170.21px;text-align:right">98</div>
<div class="abs td" style="right:298.4px;top:170.21px;text-align:right">9745</div>
<div class="abs td" style="right:236.4px;top:170.21px;text-align:right">723</div>
<div class="abs td" style="right:181.4px;top:170.21px;text-align:right">24</div>
<div class="abs td" style="right:124.2px;top:170.21px;text-align:right">42</div>
<div class="abs td" style="right:60.2px;top:170.21px;text-align:right">19</div>
<svg class="abs" style="left:829.1px;top:170.21px" width="15.4" height="8" viewBox="0 0 15.4 8"><rect x="0.95" y="0.95" width="13.5" height="6.1" rx="2" fill="#fff" stroke="#45b643" stroke-width="1.55"/><path d="M12.6 2.9l1.3 1.1-1.3 1.1z" fill="#45b643"/><rect x="2.9" y="2.7" width="4.8" height="2.6" rx="0.3" fill="#25a425"/></svg>
<div class="abs" style="left:0;top:215.21px;width:870px;height:1px;background:#ebebeb"></div>
<div class="abs td tn" style="left:4.8px;top:197.08px">WOS_009</div>
<div class="abs td tt" style="left:153.8px;top:197.08px">2023/05/02 14:53:36</div>
<svg class="abs" style="left:301.8px;top:191.28px" width="20" height="20" viewBox="-10 -10 20 20"><polygon points="0,-9.6 2.1,-5.08 6.79,-6.79 5.08,-2.1 9.6,0 5.08,2.1 6.79,6.79 2.1,5.08 0,9.6 -2.1,5.08 -6.79,6.79 -5.08,2.1 -9.6,0 -5.08,-2.1 -6.79,-6.79 -2.1,-5.08" fill="#8cc63f"/><circle r="4.5" fill="#fff"/><circle r="3.5" fill="#8cc63f"/></svg>
<svg class="abs" style="left:358.6px;top:192.58px" width="18" height="18" viewBox="-9 -9 18 18"><circle r="7.65" fill="#fff" stroke="#3cb53c" stroke-width="1.7"/><ellipse cx="-2.6" cy="-2" rx="1.15" ry="1.35" fill="#3cb53c"/><ellipse cx="2.6" cy="-2" rx="1.15" ry="1.35" fill="#3cb53c"/><path d="M-3.9 1.7a4.7 4.7 0 0 0 7.8 0" fill="none" stroke="#3cb53c" stroke-width="1.55" stroke-linecap="round"/></svg>
<div class="abs gbtn" style="left:399.6px;top:191.47px"><svg class="abs" style="left:5.2px;top:5px" width="14.6" height="10.8" viewBox="0 0 29 21.6"><path d="M1.8 0v19.6H29" fill="none" stroke="#222" stroke-width="3.6"/><path d="M6.6 13.6l5.2-5.4 4.6 4.2 6.6-6.6" fill="none" stroke="#222" stroke-width="3.4"/><path d="M17.8 2.2h9v9z" fill="#222"/></svg></div>
<div class="abs td" style="right:354.4px;top:197.08px;text-align:right">93</div>
<div class="abs td" style="right:298.4px;top:197.08px;text-align:right">4355</div>
<div class="abs td" style="right:236.4px;top:197.08px;text-align:right">400</div>
<div class="abs td" style="right:181.4px;top:197.08px;text-align:right">24</div>
<div class="abs td" style="right:124.2px;top:197.08px;text-align:right">42</div>
<div class="abs td" style="right:60.2px;top:197.08px;text-align:right">19</div>
<svg class="abs" style="left:829.1px;top:197.08px" width="15.4" height="8" viewBox="0 0 15.4 8"><rect x="0.95" y="0.95" width="13.5" height="6.1" rx="2" fill="#fff" stroke="#45b643" stroke-width="1.55"/><path d="M12.6 2.9l1.3 1.1-1.3 1.1z" fill="#45b643"/><rect x="2.9" y="2.7" width="4.8" height="2.6" rx="0.3" fill="#25a425"/></svg>
<div class="abs" style="left:0;top:242.08px;width:870px;height:1px;background:#ebebeb"></div>
<div class="abs td tn" style="left:4.8px;top:223.95px">WOS_011</div>
<div class="abs td tt" style="left:153.8px;top:223.95px">2023/05/02 14:53:44</div>
<svg class="abs" style="left:301.8px;top:218.15px" width="20" height="20" viewBox="-10 -10 20 20"><polygon points="0,-9.6 2.1,-5.08 6.79,-6.79 5.08,-2.1 9.6,0 5.08,2.1 6.79,6.79 2.1,5.08 0,9.6 -2.1,5.08 -6.79,6.79 -5.08,2.1 -9.6,0 -5.08,-2.1 -6.79,-6.79 -2.1,-5.08" fill="#8cc63f"/><circle r="4.5" fill="#fff"/><circle r="3.5" fill="#8cc63f"/></svg>
<svg class="abs" style="left:358.6px;top:219.45px" width="18" height="18" viewBox="-9 -9 18 18"><circle r="7.65" fill="#fff" stroke="#3cb53c" stroke-width="1.7"/><ellipse cx="-2.6" cy="-2" rx="1.15" ry="1.35" fill="#3cb53c"/><ellipse cx="2.6" cy="-2" rx="1.15" ry="1.35" fill="#3cb53c"/><path d="M-3.9 1.7a4.7 4.7 0 0 0 7.8 0" fill="none" stroke="#3cb53c" stroke-width="1.55" stroke-linecap="round"/></svg>
<div class="abs gbtn" style="left:399.6px;top:218.34px"><svg class="abs" style="left:5.2px;top:5px" width="14.6" height="10.8" viewBox="0 0 29 21.6"><path d="M1.8 0v19.6H29" fill="none" stroke="#222" stroke-width="3.6"/><path d="M6.6 13.6l5.2-5.4 4.6 4.2 6.6-6.6" fill="none" stroke="#222" stroke-width="3.4"/><path d="M17.8 2.2h9v9z" fill="#222"/></svg></div>
<div class="abs td" style="right:354.4px;top:223.95px;text-align:right">164</div>
<div class="abs td" style="right:298.4px;top:223.95px;text-align:right">6906</div>
<div class="abs td" style="right:236.4px;top:223.95px;text-align:right">300</div>
<div class="abs td" style="right:181.4px;top:223.95px;text-align:right">24</div>
<div class="abs td" style="right:124.2px;top:223.95px;text-align:right">42</div>
<div class="abs td" style="right:60.2px;top:223.95px;text-align:right">19</div>
<svg class="abs" style="left:829.1px;top:223.95px" width="15.4" height="8" viewBox="0 0 15.4 8"><rect x="0.95" y="0.95" width="13.5" height="6.1" rx="2" fill="#fff" stroke="#45b643" stroke-width="1.55"/><path d="M12.6 2.9l1.3 1.1-1.3 1.1z" fill="#45b643"/><rect x="2.9" y="2.7" width="4.8" height="2.6" rx="0.3" fill="#25a425"/></svg>
<div class="abs" style="left:0px;top:0;width:1px;height:240px;background:#e9e9e9"></div>
<div class="abs" style="left:149.5px;top:0;width:1px;height:240px;background:#e9e9e9"></div>
<div class="abs" style="left:283.5px;top:0;width:1px;height:240px;background:#e9e9e9"></div>
<div class="abs" style="left:338.5px;top:0;width:1px;height:240px;background:#e9e9e9"></div>
<div class="abs" style="left:395.5px;top:0;width:1px;height:240px;background:#e9e9e9"></div>
<div class="abs" style="left:455.9px;top:0;width:1px;height:240px;background:#e9e9e9"></div>
<div class="abs" style="left:511.5px;top:0;width:1px;height:240px;background:#e9e9e9"></div>
<div class="abs" style="left:567.5px;top:0;width:1px;height:240px;background:#e9e9e9"></div>
<div class="abs" style="left:629.5px;top:0;width:1px;height:240px;background:#e9e9e9"></div>
<div class="abs" style="left:684.5px;top:0;width:1px;height:240px;background:#e9e9e9"></div>
<div class="abs" style="left:741.7px;top:0;width:1px;height:240px;background:#e9e9e9"></div>
<div class="abs" style="left:805.7px;top:0;width:1px;height:240px;background:#e9e9e9"></div>
</div>
<div class="abs" style="left:902px;top:141.6px;width:6.4px;height:232.4px;background:#f4f4f4"></div>
<div class="abs" style="left:902.6px;top:151px;width:5.4px;height:57px;background:#c1c1c1"></div>
<svg class="abs" style="left:903.6px;top:145.6px" width="3.2" height="2" viewBox="0 0 8 5"><path d="M0 5l4-5 4 5z" fill="#a3a3a3"/></svg>
<svg class="abs" style="left:903.6px;top:368.6px" width="3.2" height="2" viewBox="0 0 8 5"><path d="M0 0l4 5 4-5z" fill="#505050"/></svg>
<div class="abs" style="left:39.4px;top:374.5px;width:869px;height:6.7px;background:#f1f1f1"></div>
<div class="abs" style="left:47.4px;top:374.5px;width:840px;height:6.7px;background:#c1c1c1"></div>
<svg class="abs" style="left:42px;top:376.3px" width="2" height="3.2" viewBox="0 0 5 8"><path d="M5 0L0 4l5 4z" fill="#a3a3a3"/></svg>
<svg class="abs" style="left:896px;top:376.3px" width="2" height="3.2" viewBox="0 0 5 8"><path d="M0 0l5 4-5 4z" fill="#505050"/></svg>
<div class="abs" style="left:902px;top:374.5px;width:6.4px;height:6.7px;background:#dcdcdc"></div>
<div class="panel" style="left:30.6px;top:393.4px;width:886.4px;height:104.8px;border-radius:2px 2px 0 0"><div class="phead" style="height:13.6px"></div></div>
<div class="ptitle" style="left:35px;top:396.1px">メッセージ一覧</div>
<div class="abs" style="left:905px;top:396.2px;width:8px;height:7px;border:1px solid #d0d0d0;border-radius:1.5px;background:#fff;box-shadow:0 0.5px 0.5px rgba(0,0,0,.15)"><svg class="abs" style="left:1.6px;top:1.8px" width="2.8" height="1.6" viewBox="0 0 7 4"><path d="M0 0l3.5 4L7 0z" fill="#333"/></svg></div>
<div class="abs" style="left:39.4px;top:414.2px;width:861.6px;height:16.8px;background:#3a93a3"></div>
<div class="abs" style="left:129.9px;top:414.2px;width:1px;height:16.8px;background:#7fbac4"></div>
<div class="abs" style="left:219.7px;top:414.2px;width:1px;height:16.8px;background:#7fbac4"></div>
<div class="abs th" style="top:417.5px;left:43.2px;">発生日時</div>
<div class="abs th" style="top:417.5px;left:134.2px;">ログレベル</div>
<div class="abs th" style="top:417.5px;left:225.2px;">メッセージ</div>
<svg class="abs" style="left:121.9px;top:418.3px" width="5.3" height="5.8" viewBox="0 0 12.4 12.8"><g fill="none" stroke="#fff" stroke-width="1.9"><g opacity="0.9"><path d="M3.2 12.6V1.2M0.4 4.2l2.8-3 2.8 3"/></g><g opacity="0.9"><path d="M9.2 0.2v11.4M6.4 8.6l2.8 3 2.8-3"/></g></g></svg>
<svg class="abs" style="left:211.7px;top:418.3px" width="5.3" height="5.8" viewBox="0 0 12.4 12.8"><g fill="none" stroke="#fff" stroke-width="1.9"><g opacity="0.3"><path d="M3.2 12.6V1.2M0.4 4.2l2.8-3 2.8 3"/></g><g opacity="0.3"><path d="M9.2 0.2v11.4M6.4 8.6l2.8 3 2.8-3"/></g></g></svg>
<svg class="abs" style="left:892.1px;top:418.3px" width="5.3" height="5.8" viewBox="0 0 12.4 12.8"><g fill="none" stroke="#fff" stroke-width="1.9"><g opacity="0.3"><path d="M3.2 12.6V1.2M0.4 4.2l2.8-3 2.8 3"/></g><g opacity="0.3"><path d="M9.2 0.2v11.4M6.4 8.6l2.8 3 2.8-3"/></g></g></svg>
<div class="abs" id="mbody" style="left:39.4px;top:431px;width:861.6px;height:64.2px;overflow:hidden;background:#fff">
<div class="abs" style="left:0;top:15.1px;width:870px;height:1px;background:#ebebeb"></div>
<div class="abs tm tmd" style="left:3.8px;top:3.8px">2023/05/02 14:32:44</div>
<div class="abs" style="left:94.2px;top:4px;width:83.4px;height:7.4px;filter:blur(0.7px);background:linear-gradient(90deg,#fce6e9 0%,#f9d0d6 28%,#f6bec7 50%,#f9d0d6 72%,#fce6e9 100%)"></div>
<div class="abs tm" style="left:94.6px;width:82.4px;text-align:center;top:3.7px;font-size:5.7px;color:#4a4a4a">警戒</div>
<div class="abs tm" style="left:186px;top:3.8px"><i>WOS_008</i>　脈拍数が平均値(行動時：99/安静時：95)より高い状態が続いています。 (現在脈拍192bpm)</div>
<div class="abs" style="left:0;top:31.7px;width:870px;height:1px;background:#ebebeb"></div>
<div class="abs tm tmd" style="left:3.8px;top:19.9px">2023/04/12 09:11:21</div>
<div class="abs" style="left:94.2px;top:20.1px;width:83.4px;height:7.4px;filter:blur(0.7px);background:linear-gradient(90deg,#fce6e9 0%,#f9d0d6 28%,#f6bec7 50%,#f9d0d6 72%,#fce6e9 100%)"></div>
<div class="abs tm" style="left:94.6px;width:82.4px;text-align:center;top:19.8px;font-size:5.7px;color:#4a4a4a">警戒</div>
<div class="abs tm" style="left:186px;top:19.9px"><i>WOS_004</i>　ＨＥＬＰ要請あり！　至急確認してください！</div>
<div class="abs" style="left:0;top:47.1px;width:870px;height:1px;background:#ebebeb"></div>
<div class="abs tm tmd" style="left:3.8px;top:35.9px">2023/03/29 07:19:34</div>
<div class="abs" style="left:94.2px;top:36.1px;width:83.4px;height:7.4px;filter:blur(0.7px);background:linear-gradient(90deg,#fce6e9 0%,#f9d0d6 28%,#f6bec7 50%,#f9d0d6 72%,#fce6e9 100%)"></div>
<div class="abs tm" style="left:94.6px;width:82.4px;text-align:center;top:35.8px;font-size:5.7px;color:#4a4a4a">警戒</div>
<div class="abs tm" style="left:186px;top:35.9px"><i>WOS_012</i>　転倒検知！　転倒や転落事故が発生した可能性があります。</div>
<div class="abs" style="left:0;top:63px;width:870px;height:1px;background:#ebebeb"></div>
<div class="abs tm tmd" style="left:3.8px;top:51.55px">2023/03/23 16:48:57</div>
<div class="abs" style="left:94.2px;top:51.75px;width:83.4px;height:7.4px;filter:blur(0.7px);background:linear-gradient(90deg,#fce6e9 0%,#f9d0d6 28%,#f6bec7 50%,#f9d0d6 72%,#fce6e9 100%)"></div>
<div class="abs tm" style="left:94.6px;width:82.4px;text-align:center;top:51.45px;font-size:5.7px;color:#4a4a4a">警戒</div>
<div class="abs tm" style="left:186px;top:51.55px"><i>WOS_019</i>　ＨＥＬＰ要請あり！　至急確認してください！</div>
<div class="abs" style="left:0px;top:0;width:1px;height:80px;background:#e9e9e9"></div>
<div class="abs" style="left:90.5px;top:0;width:1px;height:80px;background:#e9e9e9"></div>
<div class="abs" style="left:180.3px;top:0;width:1px;height:80px;background:#e9e9e9"></div>
</div>
<div class="abs" style="left:901px;top:431.8px;width:8px;height:63.8px;background:#f1f1f1"></div>
<div class="abs" style="left:902.2px;top:439.8px;width:5.8px;height:9.8px;background:#c1c1c1"></div>
<svg class="abs" style="left:903.4px;top:435px" width="3.2" height="2" viewBox="0 0 8 5"><path d="M0 5l4-5 4 5z" fill="#a3a3a3"/></svg>
<svg class="abs" style="left:903.4px;top:491px" width="3.2" height="2" viewBox="0 0 8 5"><path d="M0 0l4 5 4-5z" fill="#505050"/></svg>
</div></div>

  <div id="foot">Copyright © FUJIFILM Digital Solutions Corporation. All Rights Reserved.</div>
</div>
</div>
</body>
</html>
